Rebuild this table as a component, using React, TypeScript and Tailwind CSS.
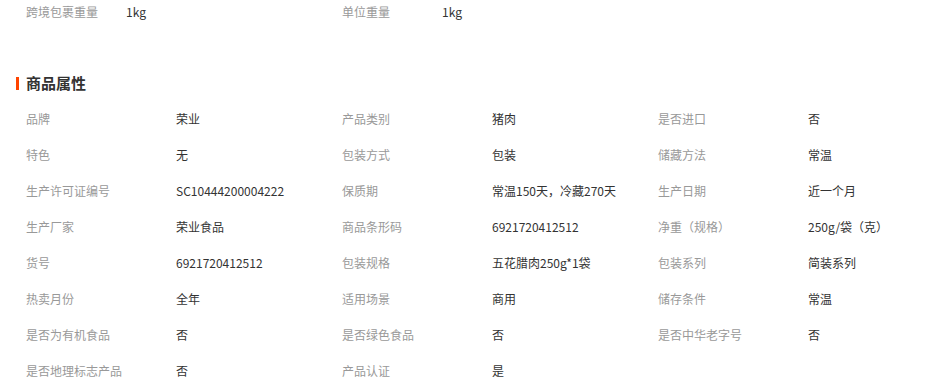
const TOP = [
  { label: "跨境包裹重量", value: "1kg" },
  { label: "单位重量", value: "1kg" },
];

const ATTRS = [
  ["品牌", "荣业"],
  ["产品类别", "猪肉"],
  ["是否进口", "否"],
  ["特色", "无"],
  ["包装方式", "包装"],
  ["储藏方法", "常温"],
  ["生产许可证编号", "SC10444200004222"],
  ["保质期", "常温150天，冷藏270天"],
  ["生产日期", "近一个月"],
  ["生产厂家", "荣业食品"],
  ["商品条形码", "6921720412512"],
  ["净重（规格）", "250g/袋（克）"],
  ["货号", "6921720412512"],
  ["包装规格", "五花腊肉250g*1袋"],
  ["包装系列", "简装系列"],
  ["热卖月份", "全年"],
  ["适用场景", "商用"],
  ["储存条件", "常温"],
  ["是否为有机食品", "否"],
  ["是否绿色食品", "否"],
  ["是否中华老字号", "否"],
  ["是否地理标志产品", "否"],
  ["产品认证", "是"],
];

export default function App() {
  return (
    <div
      className="w-[952px] h-[379px] overflow-hidden bg-white text-[12px] text-[#333]"
      style={{ fontFamily: '"Noto Sans CJK SC", "Microsoft YaHei", sans-serif' }}
    >
      {/* top weight row */}
      <div className="flex pl-[26px] h-6 items-center">
        {TOP.map((t) => (
          <div key={t.label} className="flex w-[316px]">
            <span className="w-[100px] text-[#999]">{t.label}</span>
            <span>{t.value}</span>
          </div>
        ))}
      </div>

      {/* section title */}
      <div className="mt-[49px] h-5 flex items-center pl-4">
        <span className="w-[3px] h-[13px] bg-[#ff4400] mr-[7px]" />
        <h3 className="text-[15px] leading-5 font-bold text-[#333]">商品属性</h3>
      </div>

      {/* attribute grid */}
      <div className="mt-2 pl-[26px] grid grid-cols-[316px_316px_316px]">
        {ATTRS.map(([label, value]) => (
          <div key={label} className="flex h-9 items-center">
            <span className="w-[150px] text-[#999]">{label}</span>
            <span>{value}</span>
          </div>
        ))}
      </div>
    </div>
  );
}
